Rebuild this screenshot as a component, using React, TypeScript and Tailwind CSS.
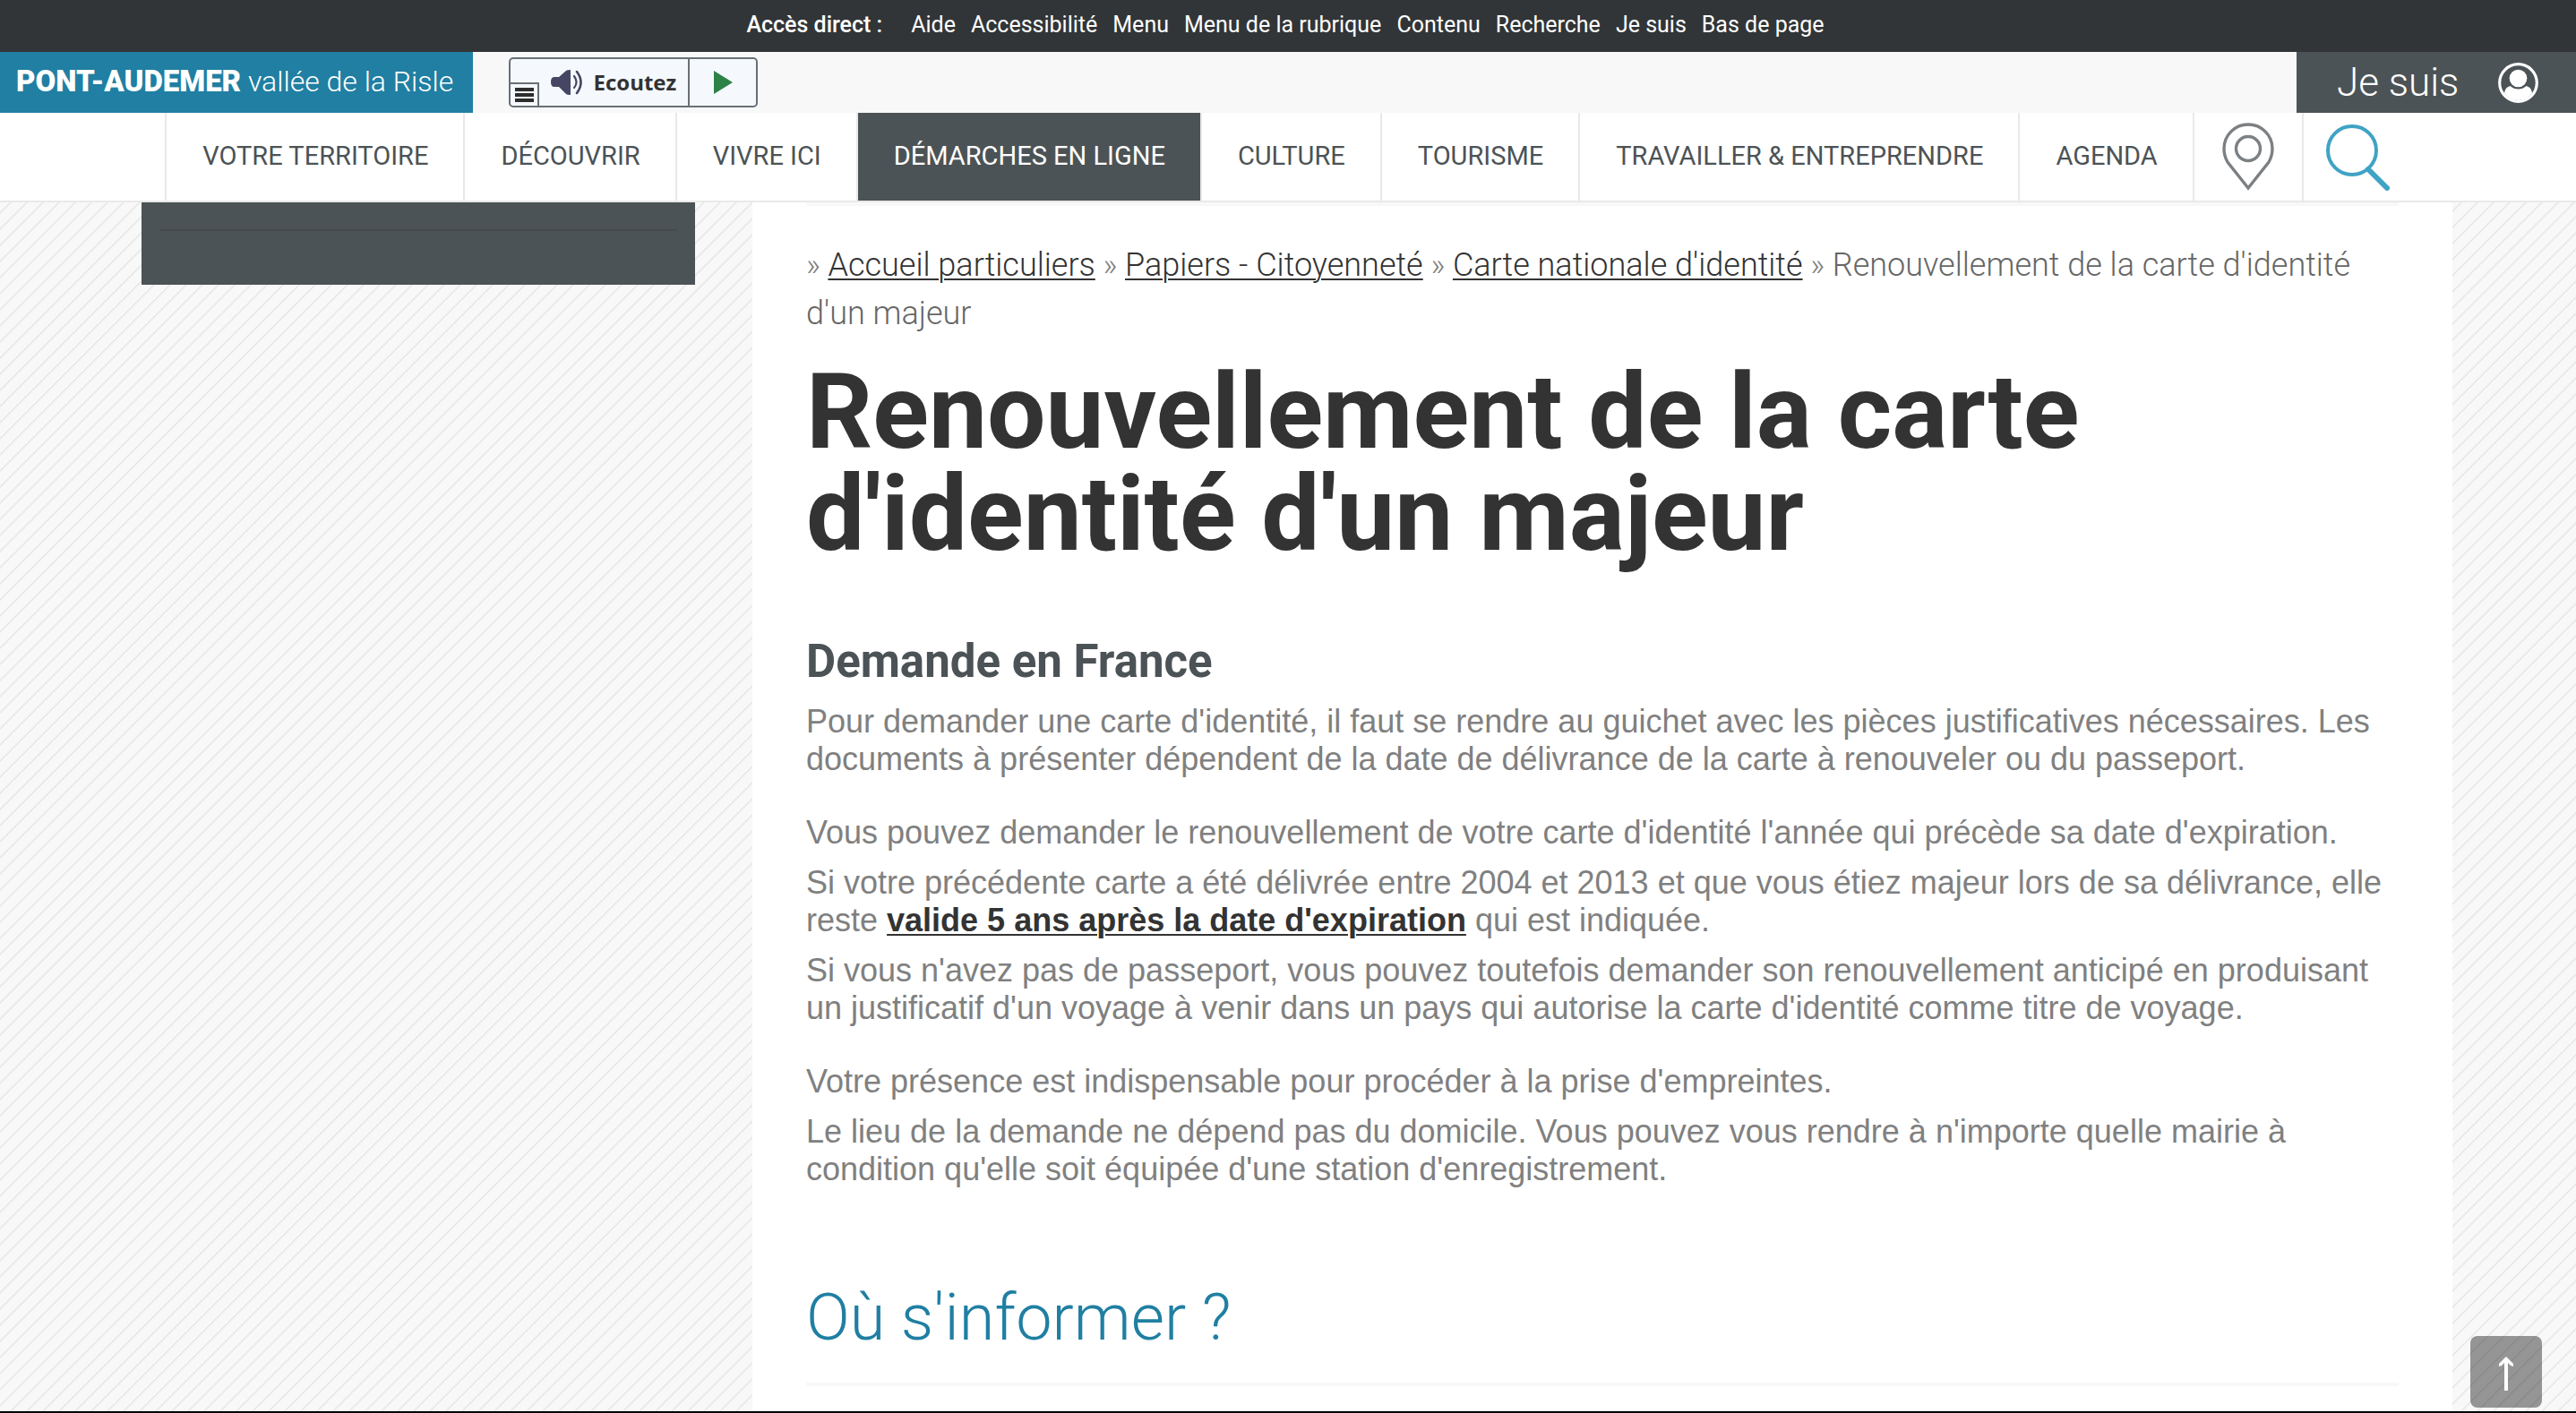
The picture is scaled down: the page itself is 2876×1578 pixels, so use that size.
import React from "react";

const quickLinks = ["Aide", "Accessibilité", "Menu", "Menu de la rubrique", "Contenu", "Recherche", "Je suis", "Bas de page"];

const navItems = [
  { label: "VOTRE TERRITOIRE" },
  { label: "DÉCOUVRIR" },
  { label: "VIVRE ICI" },
  { label: "DÉMARCHES EN LIGNE", active: true },
  { label: "CULTURE" },
  { label: "TOURISME" },
  { label: "TRAVAILLER & ENTREPRENDRE" },
  { label: "AGENDA" },
];

const crumbs = ["Accueil particuliers", "Papiers - Citoyenneté", "Carte nationale d'identité"];

function QuickAccess() {
  return (
    <nav aria-label="Accès direct" className="flex h-[58px] items-center justify-center bg-[#313538] pb-[2px] pr-[6px] text-[25px] text-white">
      <span className="mr-8 font-medium">Accès direct :</span>
      <ul className="flex gap-[17px]">
        {quickLinks.map((l) => (
          <li key={l}><a href="#">{l}</a></li>
        ))}
      </ul>
    </nav>
  );
}

function ListenWidget() {
  return (
    <div className="relative ml-10 flex h-14 w-[278px] overflow-hidden rounded-[5px] border-2 border-[#686f77] bg-[#f5f9fd]">
      <button type="button" className="flex flex-1 items-center justify-end border-r-2 border-[#686f77] pr-[13px] font-['Open_Sans',sans-serif] text-[24px] font-bold text-[#333]">
        <svg viewBox="0 0 36 28" className="mr-3 h-7 w-9" aria-hidden="true">
          <path d="M4 8h5L17 1q1-1 5-1v28q-4 0-5-1L9 19H4q-4 0-4-5.500T4 8z" fill="#464664" />
          <path d="M26 7q5 7 0 13" fill="none" stroke="#464664" strokeWidth="2.200" strokeLinecap="round" />
          <path d="M29 2q9 12 0 24" fill="none" stroke="#464664" strokeWidth="2.600" strokeLinecap="round" />
        </svg>
        Ecoutez
      </button>
      <button type="button" aria-label="Lecture" className="flex w-[74px] items-center justify-center">
        <svg viewBox="0 0 21 26" className="h-[26px] w-[21px]" aria-hidden="true">
          <path d="M0 0L21 13L0 26z" fill="#2d8246" />
        </svg>
      </button>
      <button type="button" aria-label="Menu audio" className="absolute bottom-0 left-0 flex h-[26px] w-8 flex-col items-center justify-center gap-[2px] border-r-2 border-t-2 border-[#686f77]">
        <span className="h-1 w-[21px] bg-[#2d2d2d]" />
        <span className="h-1 w-[21px] bg-[#2d2d2d]" />
        <span className="h-1 w-[21px] bg-[#2d2d2d]" />
      </button>
    </div>
  );
}

function Banner() {
  return (
    <div className="flex h-[68px] items-center bg-[#f8f8f8]">
      <a href="#" className="flex h-full items-center bg-[#207fa2] pb-[3px] pl-[18px] pr-[22px] text-[32px] font-light text-white">
        <span><b className="text-[33px] font-black">PONT-AUDEMER</b> vallée de la Risle</span>
      </a>
      <ListenWidget />
      <button type="button" className="ml-auto flex h-full w-[312px] items-center justify-between bg-[#4c5356] pl-[45px] pr-[42px] text-[44px] font-light text-white">
        Je suis
        <svg viewBox="0 0 45 45" className="h-[45px] w-[45px]" aria-hidden="true">
          <circle cx="22.500" cy="22.500" r="20.800" fill="none" stroke="#fff" strokeWidth="3.200" />
          <circle cx="22.500" cy="17.500" r="9.800" fill="#fff" />
          <path d="M7 34q1-7 6.500-8 4 3.500 9 3.500t9-3.500q5.500 1 6.500 8A19 19 0 0 1 7 34z" fill="#fff" />
        </svg>
      </button>
    </div>
  );
}

function MainNav() {
  return (
    <nav aria-label="Menu principal" className="border-b-2 border-[#e9e9e9] bg-white">
      <ul className="flex h-[98px] justify-center text-[29px] text-[#4c5356]">
        {navItems.map((n) => (
          <li key={n.label} className="border-l-2 border-[#e9e9e9]">
            <a
              href="#"
              aria-current={n.active ? "page" : undefined}
              className={
                n.active
                  ? "flex h-full items-center bg-[#4c5356] pb-px pl-10 pr-[39px] text-white"
                  : "flex h-full items-center pb-px pl-10 pr-[39px]"
              }
            >
              {n.label}
            </a>
          </li>
        ))}
        <li className="border-l-2 border-[#e9e9e9]">
          <a href="#" aria-label="Carte" className="flex h-full w-[120px] items-center justify-center">
            <svg viewBox="0 0 58 76" className="h-[76px] w-[58px]" fill="none" stroke="#7c8083" strokeWidth="3.400" aria-hidden="true">
              <path d="M29 73L6 44Q2 37 2 29a27 27 0 0 1 54 0q0 8-4 15z" />
              <circle cx="29" cy="29" r="13.500" />
            </svg>
          </a>
        </li>
        <li className="border-l-2 border-[#e9e9e9]">
          <a href="#" aria-label="Recherche" className="flex h-full w-[120px] items-center pl-6">
            <svg viewBox="0 0 72 76" className="h-[76px] w-[72px]" fill="none" stroke="#3fa3c4" aria-hidden="true">
              <circle cx="30" cy="31" r="27" strokeWidth="4" />
              <path d="M48 52L69 73" strokeWidth="6" strokeLinecap="round" />
            </svg>
          </a>
        </li>
      </ul>
    </nav>
  );
}

function Separator() {
  return <span className="text-[35px] leading-none text-[#808080]">{"» "}</span>;
}

function Article() {
  return (
    <main className="min-w-0 flex-1 bg-white px-[60px]">
      <div className="h-1 bg-[#f8f8f8]" />
      <nav aria-label="Fil d'Ariane" className="mt-[39px] text-[36px] font-light leading-[54px] text-[#666]">
        {crumbs.map((c) => (
          <React.Fragment key={c}>
            <Separator />
            <a href="#" className="text-[#333] underline decoration-2 underline-offset-3">{c}</a>{" "}
          </React.Fragment>
        ))}
        <Separator />
        Renouvellement de la carte d'identité d'un majeur
      </nav>
      <h1 className="mt-[26px] text-[116px] font-bold leading-[114px] text-[#333]">
        Renouvellement de la carte d'identité d'un majeur
      </h1>
      <h3 className="mt-[78px] text-[51px] font-bold leading-[60px] text-[#4c5356]">Demande en France</h3>
      <div className="mt-4 flex flex-col gap-10 font-['Liberation_Sans',Arial,sans-serif] text-[36px] leading-[42px] text-[#808080]">
        <p>
          Pour demander une carte d'identité, il faut se rendre au guichet avec les pièces justificatives nécessaires. Les
          documents à présenter dépendent de la date de délivrance de la carte à renouveler ou du passeport.
        </p>
        <div className="flex flex-col gap-[14px]">
          <p>Vous pouvez demander le renouvellement de votre carte d'identité l'année qui précède sa date d'expiration.</p>
          <p>
            Si votre précédente carte a été délivrée entre 2004 et 2013 et que vous étiez majeur lors de sa délivrance, elle
            reste{" "}
            <a href="#" className="font-bold text-[#333] underline decoration-2 underline-offset-3">
              valide 5 ans après la date d'expiration
            </a>{" "}
            qui est indiquée.
          </p>
          <p>
            Si vous n'avez pas de passeport, vous pouvez toutefois demander son renouvellement anticipé en produisant un
            justificatif d'un voyage à venir dans un pays qui autorise la carte d'identité comme titre de voyage.
          </p>
        </div>
        <div className="flex flex-col gap-[14px]">
          <p>Votre présence est indispensable pour procéder à la prise d'empreintes.</p>
          <p>
            Le lieu de la demande ne dépend pas du domicile. Vous pouvez vous rendre à n'importe quelle mairie à condition
            qu'elle soit équipée d'une station d'enregistrement.
          </p>
        </div>
      </div>
      <h2 className="mt-[103px] text-[72px] font-light leading-[84px] text-[#207fa2]">Où s'informer ?</h2>
      <hr className="mt-[30px] border-t-4 border-[#f8f8f8]" />
    </main>
  );
}

export default function App() {
  return (
    <div className="flex min-h-screen flex-col border-b-2 border-black font-[Roboto,sans-serif]">
      <header>
        <QuickAccess />
        <Banner />
        <MainNav />
      </header>
      <div className="flex flex-1 gap-16 bg-[#f8f8f8] bg-[linear-gradient(135deg,#f8f8f8_20%,#e6e6e6_24%,#e6e6e6_26%,#f8f8f8_30%,#f8f8f8_70%,#e6e6e6_74%,#e6e6e6_76%,#f8f8f8_80%)] bg-[length:18px_18px] bg-[position:3px_0px] pl-[158px] pr-[138px]">
        <aside className="h-[92px] w-[618px] shrink-0 bg-[#4c5356] px-5 pt-[30px]">
          <hr className="border-t-2 border-[#454b4e]" />
        </aside>
        <Article />
      </div>
      <button type="button" aria-label="Haut de page" className="fixed bottom-[6px] right-[38px] flex h-20 w-20 items-center justify-center rounded-lg bg-black/40 pt-1">
        <svg viewBox="0 0 16 38" className="h-[38px] w-4" aria-hidden="true">
          <path d="M8 0l8 8v3q-4-1-6-4v31H6V7q-2 3-6 4V8z" fill="#fff" />
        </svg>
      </button>
    </div>
  );
}
